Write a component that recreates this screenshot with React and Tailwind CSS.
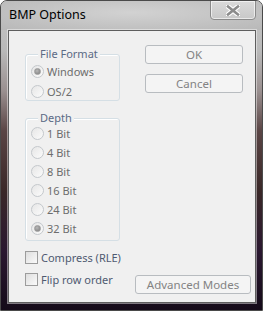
import React from "react";

const font = { fontFamily: '"Noto Sans", "Open Sans", sans-serif' };

function Radio({ label, checked }) {
  return (
    <div className="flex items-center h-[13px]">
      <div className="w-[13px] h-[13px] rounded-full border border-[#c4c8cc] bg-[linear-gradient(135deg,#e6e6e6,#fbfbfb)] flex items-center justify-center shrink-0">
        {checked && (
          <div className="w-[7px] h-[7px] rounded-full bg-[radial-gradient(circle_at_40%_35%,#b8b8b8,#7c7c7c)] border border-[#9a9a9a]" />
        )}
      </div>
      <span className="ml-[3px] text-[11px] leading-none text-[#6d6d6d]">{label}</span>
    </div>
  );
}

function Check({ label }) {
  return (
    <div className="flex items-center h-[13px]">
      <div className="w-[13px] h-[13px] border border-[#9c9c9c] bg-[linear-gradient(135deg,#dedede,#fafafa)] shrink-0" />
      <span className="ml-[3px] text-[11px] leading-none text-[#4f5a70]">{label}</span>
    </div>
  );
}

function Btn({ label, className }) {
  return (
    <div
      className={
        "h-[19px] rounded-[3px] border border-[#b8bcc0] bg-[#f4f4f4] flex items-center justify-center text-[11.5px] leading-none text-[#838383] " +
        (className || "")
      }
    >
      {label}
    </div>
  );
}

function Group({ label, className, children }) {
  return (
    <div className={"relative rounded-[3px] border border-[#d5dfe5] shadow-[inset_1px_1px_0_#ffffff] " + className}>
      <span className="absolute left-[12px] top-[-7px] px-[2px] bg-[#f0f0f0] text-[11px] leading-none text-[#5b6a85]">
        {label}
      </span>
      {children}
    </div>
  );
}

export default function App() {
  return (
    <div
      style={font}
      className="w-[263px] h-[311px] overflow-hidden rounded-t-[7px] border border-[#4a4a4a] bg-[linear-gradient(to_bottom,#c6c6c6_0px,#b9b9b9_50px,#9a9090_90px,#5a4545_130px,#3a2828_190px,#2a1830_250px,#140a18_311px)] flex flex-col"
    >
      <div className="h-[29px] flex items-start justify-between shrink-0 bg-[radial-gradient(ellipse_at_50%_40%,#d2d2d2,#c2c2c2_60%,#b8b8b8)]">
        <span className="mt-[8px] ml-[8px] text-[12.5px] leading-none text-black">BMP Options</span>
        <div className="mr-[6px] mt-[-1px] w-[46px] h-[20px] rounded-b-[4px] border border-[#8a8a8a] bg-[linear-gradient(to_bottom,#dadada,#c8c8c8)] shadow-[inset_0_0_0_1px_rgba(255,255,255,0.6)] flex items-center justify-center">
          <svg width="14" height="11" viewBox="0 0 14 11">
            <path d="M2 1.5 L12 9.5 M12 1.5 L2 9.5" stroke="#ffffff" strokeWidth="4.8" strokeLinecap="square" />
            <path d="M2 1.5 L12 9.5 M12 1.5 L2 9.5" stroke="#8c8c8c" strokeWidth="2.6" strokeLinecap="square" />
          </svg>
        </div>
      </div>
      <div className="ml-[7px] mr-[6px] mb-[7px] flex-1 border border-[#5e5e5e] bg-[#f0f0f0] shadow-[0_0_0_1px_rgba(255,255,255,0.45)] flex flex-col">
        <div className="flex">
          <div className="ml-[16px] w-[95px] flex flex-col">
            <Group label="File Format" className="mt-[23px] h-[47px] pt-[10px] pl-[5px] flex flex-col gap-[7px]">
              <Radio label="Windows" checked />
              <Radio label="OS/2" />
            </Group>
            <Group label="Depth" className="mt-[17px] h-[123px] pt-[8px] pl-[5px] flex flex-col gap-[6px]">
              <Radio label="1 Bit" />
              <Radio label="4 Bit" />
              <Radio label="8 Bit" />
              <Radio label="16 Bit" />
              <Radio label="24 Bit" />
              <Radio label="32 Bit" checked />
            </Group>
          </div>
          <div className="ml-[25px] mt-[14px] w-[98px] flex flex-col gap-[10px]">
            <Btn label="OK" />
            <Btn label="Cancel" />
          </div>
        </div>
        <div className="ml-[16px] mt-[10px]">
          <Check label="Compress (RLE)" />
        </div>
        <div className="ml-[16px] flex items-start">
          <div className="mt-[9px]">
            <Check label="Flip row order" />
          </div>
          <Btn label="Advanced Modes" className="ml-auto mr-[4px] w-[116px] mt-[11px]" />
        </div>
      </div>
    </div>
  );
}
